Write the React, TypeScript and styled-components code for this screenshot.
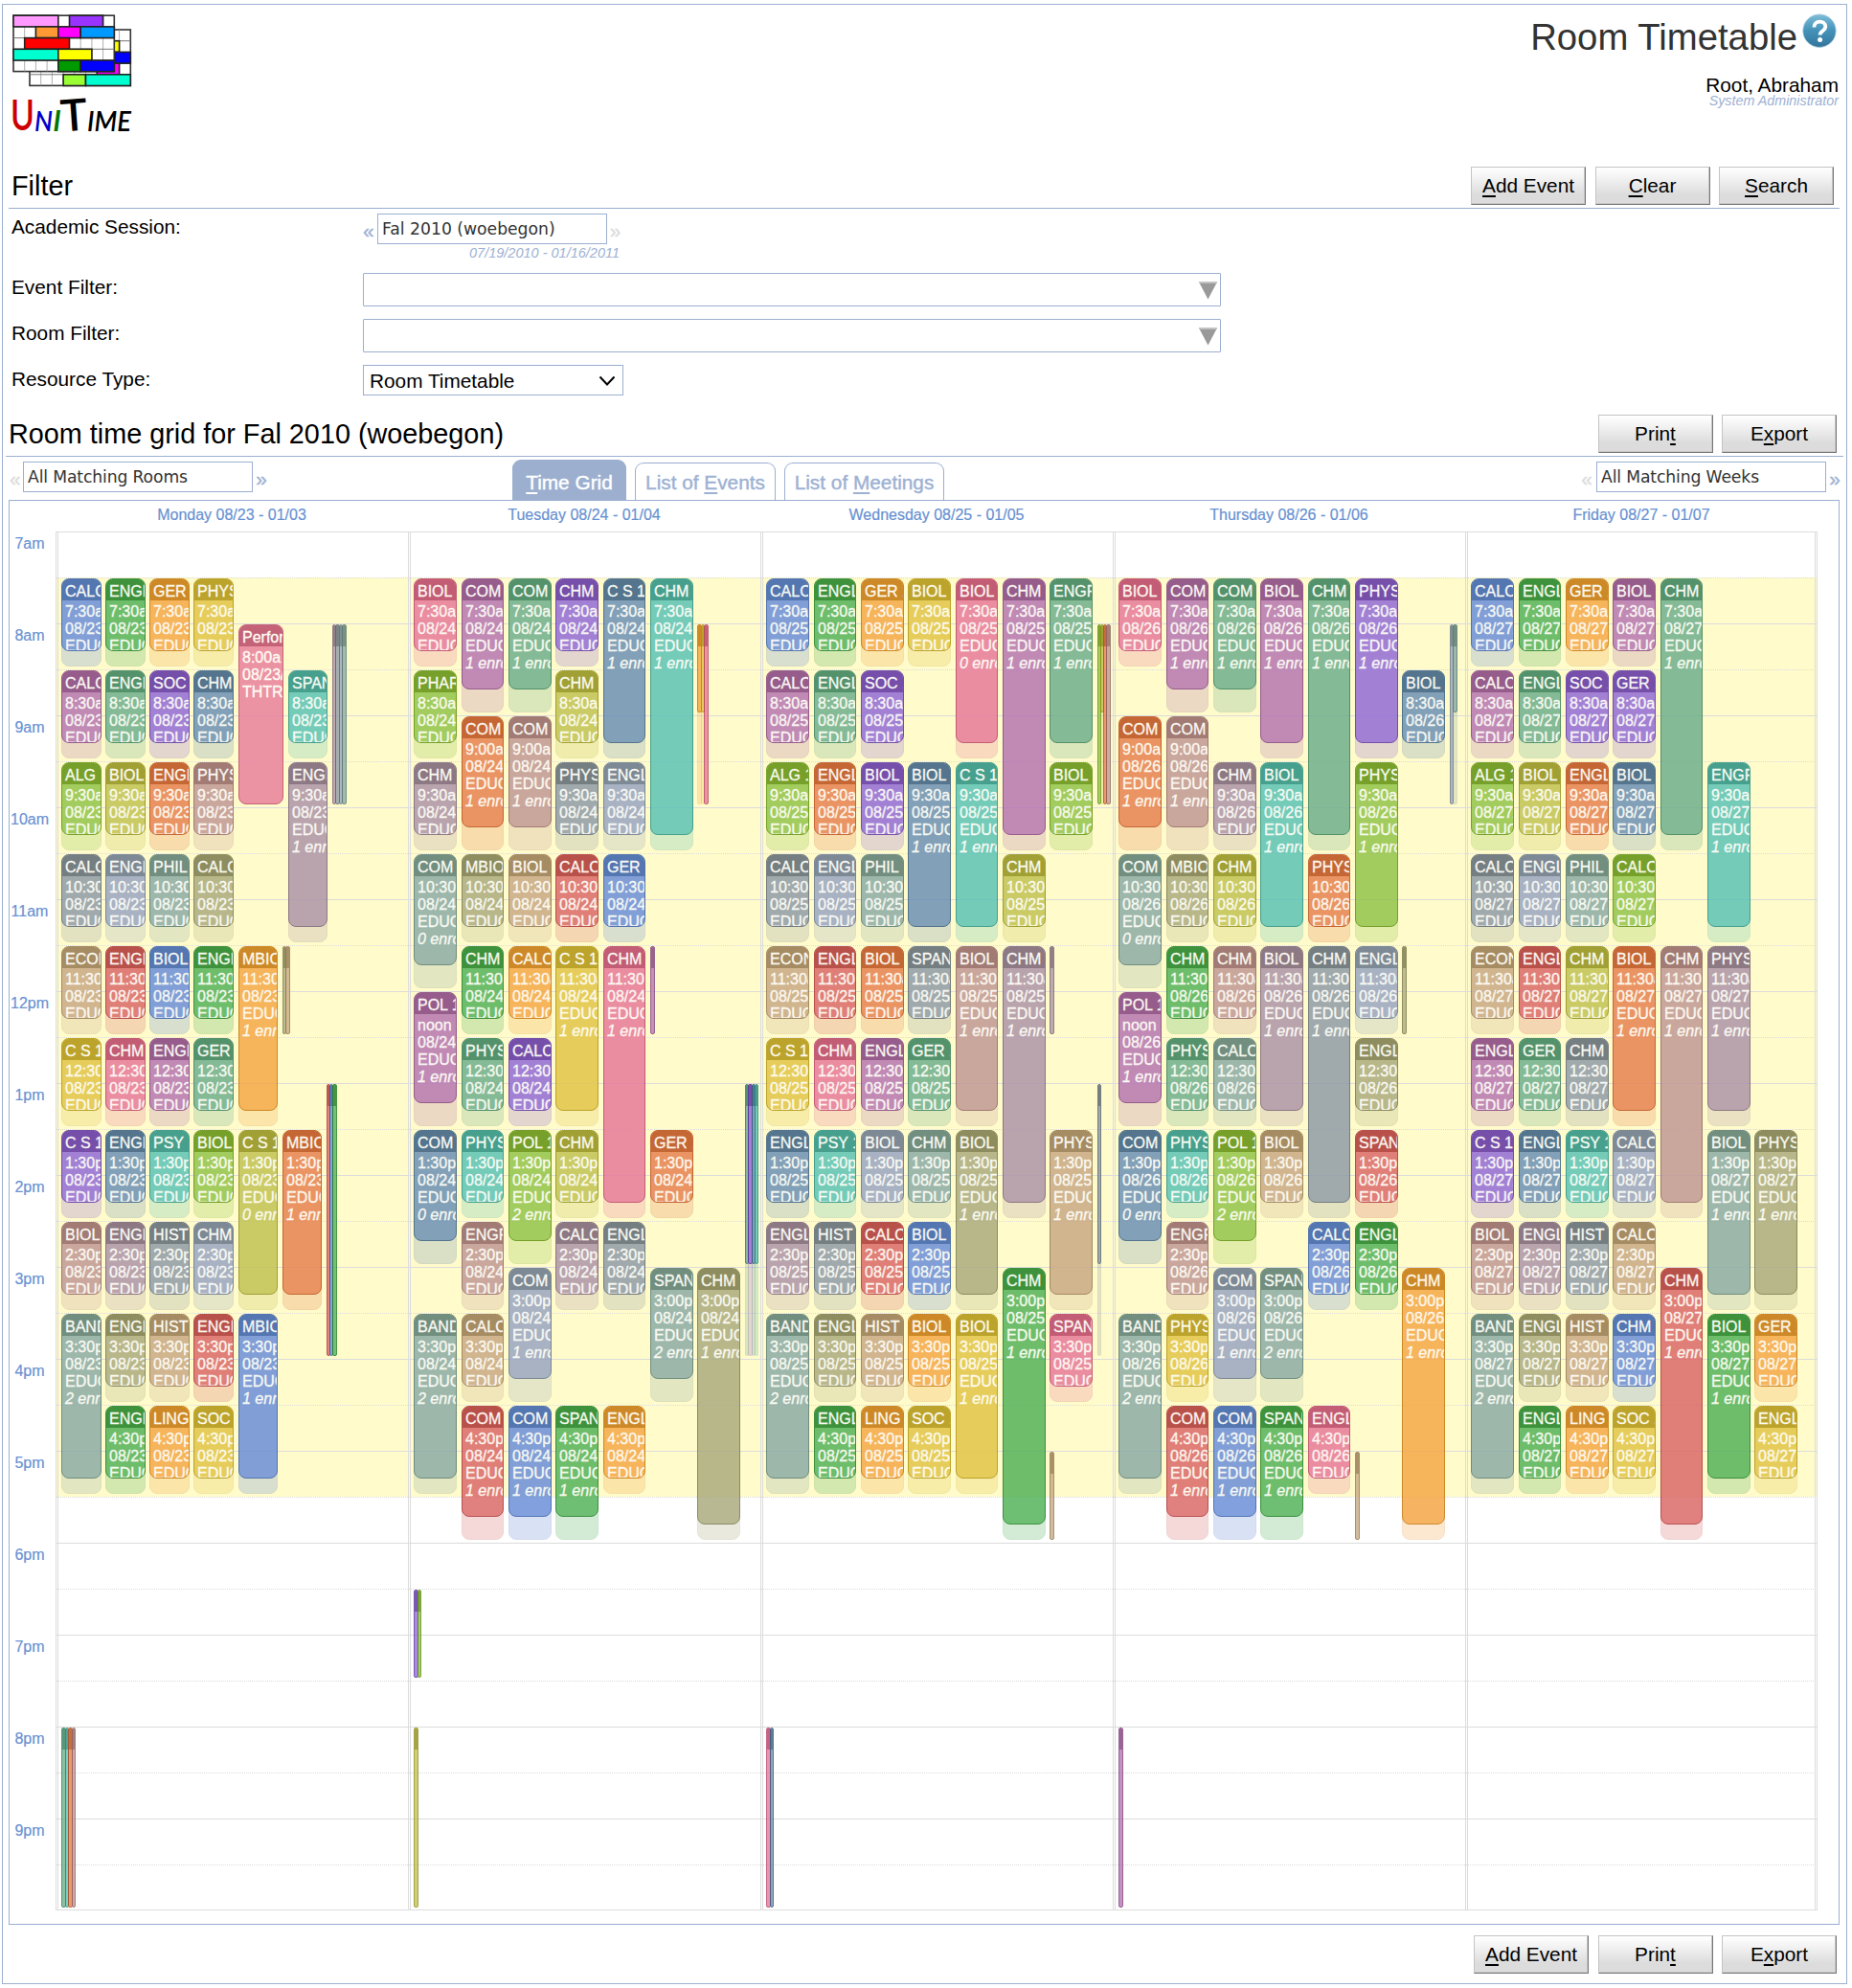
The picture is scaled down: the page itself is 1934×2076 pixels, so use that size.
import React from "react";
import styled, { createGlobalStyle, css } from "styled-components";

const LINE = "#9bafd0";
const LINK = "#9db1d3";
const SANS = `"Liberation Sans", Arial, sans-serif`;
const WIDE = `"DejaVu Sans", Verdana, sans-serif`;

const HOUR = 96;
const FIRST_HOUR = 7;

const Global = createGlobalStyle`
  *, *::before, *::after { box-sizing: border-box; }
  body { margin: 0; background: #fff; font-family: ${SANS}; font-size: 20.8px; color: #000; }
`;

/* ---------- palette: [body, header] ---------- */
const palette = {
  blue: ["rgb(108,144,216)", "rgb(51,92,170)"],
  green: ["rgb(85,179,91)", "rgb(25,125,31)"],
  orange: ["rgb(245,168,72)", "rgb(194,115,7)"],
  yellow: ["rgb(226,198,72)", "rgb(174,145,12)"],
  pink: ["rgb(232,122,154)", "rgb(182,62,99)"],
  mauve: ["rgb(182,119,178)", "rgb(129,62,125)"],
  jade: ["rgb(111,176,140)", "rgb(50,125,88)"],
  violet: ["rgb(147,109,215)", "rgb(91,46,162)"],
  slate: ["rgb(109,145,180)", "rgb(51,91,128)"],
  turq: ["rgb(91,195,182)", "rgb(36,142,128)"],
  lime: ["rgb(147,196,75)", "rgb(91,142,11)"],
  moss: ["rgb(194,195,84)", "rgb(142,142,24)"],
  rust: ["rgb(231,131,81)", "rgb(185,74,24)"],
  rose: ["rgb(194,153,149)", "rgb(142,98,98)"],
  plum: ["rgb(173,149,169)", "rgb(119,96,116)"],
  gray: ["rgb(144,156,167)", "rgb(91,102,114)"],
  steel: ["rgb(153,166,193)", "rgb(100,115,136)"],
  sage: ["rgb(141,172,166)", "rgb(86,121,111)"],
  olive: ["rgb(172,172,128)", "rgb(119,119,74)"],
  tan: ["rgb(200,169,133)", "rgb(148,118,78)"],
  red: ["rgb(219,106,105)", "rgb(171,49,50)"],
} as const;
type Tone = keyof typeof palette;

/* ---------- frame & header ---------- */
const Frame = styled.div`
  margin: 4px 0 0 2px;
  width: 1927px;
  height: 2068px;
  border: 1px solid ${LINE};
`;
const Header = styled.header`
  height: 165px;
  display: flex;
  justify-content: space-between;
  padding: 9px 8px 0 9px;
`;
const HeaderRight = styled.div`
  display: flex;
  flex-direction: column;
  align-items: flex-end;
`;
const TitleRow = styled.div`
  display: flex;
  align-items: flex-start;
  gap: 5px;
  margin-right: 2px;
  height: 60px;
`;
const Title = styled.h1`
  margin: 3px 0 0;
  font-size: 38.3px;
  line-height: 44px;
  font-weight: 400;
  color: #333;
`;
const User = styled.div`
  margin-top: 4px;
  line-height: 22px;
`;
const Role = styled.div`
  font-size: 14.3px;
  line-height: 14px;
  margin-top: -2px;
  font-style: italic;
  color: ${LINK};
`;

/* ---------- sections ---------- */
const SectionHead = styled.div<{ $wide?: boolean }>`
  display: flex;
  justify-content: space-between;
  align-items: flex-start;
  border-bottom: 1px solid ${LINE};
  ${(p) =>
    p.$wide
      ? css`margin: 0 3px; height: 52px; padding: 8px 7px 0 3px;`
      : css`margin: 0 7px 0 6px; height: 48px; padding: 4px 6px 0 3px;`}
`;
const Heading = styled.h2`
  margin: 3px 0 0;
  font-size: 28.8px;
  line-height: 34px;
  font-weight: 400;
`;
const Buttons = styled.div`
  display: flex;
  gap: 9.5px;
`;
const Button = styled.button`
  width: 120px;
  height: 40px;
  padding: 0 0 1px;
  font: 20.8px/24px ${SANS};
  color: #000;
  border: 1px solid;
  border-color: #c4c4c4 #777 #777 #c4c4c4;
  box-shadow: inset -1px -1px 0 #c6c6c6;
  background: linear-gradient(#fff 0%, #f4f4f4 25%, #dcdcdc 75%, #dcdcdc 100%);
  white-space: nowrap;
`;
const Key = styled.span`
  text-decoration: underline;
  text-underline-offset: 3px;
  text-decoration-thickness: 2px;
`;
const FormRow = styled.div<{ $h: number }>`
  display: grid;
  grid-template-columns: 367px 1fr;
  height: ${(p) => p.$h}px;
  padding: 4px 0 0 9px;
`;
const Label = styled.label`
  line-height: 24px;
  padding-top: 3px;
`;
const SessionField = styled.div`
  width: 268px;
  padding-top: 1px;
`;
const SelectorRow = styled.div`
  display: flex;
  align-items: flex-start;
`;
const Arrow = styled.span<{ $off?: boolean; $w: number }>`
  flex: none;
  width: ${(p) => p.$w}px;
  padding-right: 4px;
  text-align: center;
  font-size: 20.8px;
  line-height: 35px;
  color: ${(p) => (p.$off ? "#dcdcdc" : LINK)};
  -webkit-text-stroke: 0.4px currentColor;
  &:last-child { padding: 0 0 0 2px; }
`;
const TextBox = styled.div<{ $tight?: boolean }>`
  flex: none;
  width: 240px;
  height: 32px;
  border: 1px solid ${LINE};
  padding-left: 4px;
  font-family: ${WIDE};
  font-size: 17.2px;
  letter-spacing: ${(p) => (p.$tight ? "-0.13px" : "0")};
  line-height: 31px;
  color: #333;
  white-space: nowrap;
`;
const Dates = styled.div`
  font-size: 14.5px;
  font-style: italic;
  color: ${LINK};
  line-height: 17px;
  margin-top: -2px;
  text-align: right;
`;
const FilterBox = styled.div`
  width: 896px;
  height: 35px;
  border: 1px solid ${LINE};
  border-radius: 1px;
  display: flex;
  justify-content: flex-end;
  padding: 8px 3px 0 0;
`;
const Select = styled.div`
  width: 272px;
  height: 32px;
  border: 1px solid ${LINE};
  display: flex;
  justify-content: space-between;
  align-items: center;
  padding: 1px 7px 0 6px;
  line-height: 24px;
`;

/* ---------- toolbar ---------- */
const Toolbar = styled.div`
  height: 45px;
  display: grid;
  grid-template-columns: 525px 1fr 277px;
  padding: 0 0 0 7px;
`;
const ToolSide = styled(SelectorRow)`
  padding-top: 5px;
`;
const Tabs = styled.div`
  display: flex;
  align-items: flex-end;
`;
const Tab = styled.div<{ $active?: boolean; $w: number }>`
  width: ${(p) => p.$w}px;
  height: ${(p) => (p.$active ? 42 : 39)}px;
  margin-right: 9px;
  border: 1px solid ${LINE};
  border-bottom: 0;
  border-radius: 9px 9px 0 0;
  text-align: center;
  line-height: 24px;
  padding-top: ${(p) => (p.$active ? 11 : 8)}px;
  background: ${(p) => (p.$active ? "#9dafcf" : "#fff")};
  color: ${(p) => (p.$active ? "#fff" : LINK)};
  white-space: nowrap;
  -webkit-text-stroke: 0.4px currentColor;
`;

/* ---------- timetable ---------- */
const Panel = styled.section`
  margin: 0 7px 0 6px;
  height: 1488px;
  border: 1px solid ${LINE};
`;
const DayNames = styled.div`
  display: grid;
  grid-template-columns: repeat(5, 368px);
  padding-left: 48px;
  height: 32px;
`;
const DayName = styled.div`
  text-align: center;
  font-size: 16px;
  line-height: 18px;
  padding-top: 6px;
  color: #6992d2;
  -webkit-text-stroke: 0.2px currentColor;
`;
const GridRow = styled.div`
  display: flex;
`;
const Times = styled.div`
  width: 48px;
  padding-right: 6px;
`;
const Time = styled.div`
  height: ${HOUR}px;
  padding-top: 4px;
  text-align: center;
  font-size: 16px;
  line-height: 18px;
  color: #6992d2;
  -webkit-text-stroke: 0.2px currentColor;
`;
const Canvas = styled.div`
  position: relative;
  width: 1840px;
  border-bottom: 1px solid #ddd;
  height: 1440px;
`;
const Half = styled.div<{ $dotted: boolean; $work: boolean }>`
  height: 48px;
  margin-left: 1px;
  border-top: 1px ${(p) => (p.$dotted ? "dotted" : "solid")} #dcdcdc;
  background: ${(p) => (p.$work ? "#fffbcb" : "transparent")};
`;
const Days = styled.div`
  position: absolute;
  inset: 0;
  display: flex;
`;
const Day = styled.div`
  position: relative;
  width: 368px;
  border-left: 3px double #dcdcdc;
  &:last-child { border-right: 3px double #dcdcdc; }
`;

const Block = styled.div`
  position: absolute;
`;
const Ghost = styled.div<{ $tone: Tone; $thin: boolean }>`
  position: absolute;
  inset: 0;
  border: 1px solid color-mix(in srgb, ${(p) => palette[p.$tone][1]} 45%, ${(p) => palette[p.$tone][0]});
  border-radius: ${(p) => (p.$thin ? 2 : 8)}px;
  background: ${(p) => palette[p.$tone][0]};
  opacity: 0.25;
`;
const Meeting = styled.div<{ $tone: Tone; $thin: boolean }>`
  position: relative;
  border: 1px solid ${(p) => palette[p.$tone][1]};
  border-radius: ${(p) => (p.$thin ? 2 : 8)}px;
  background: ${(p) => palette[p.$tone][0]};
  opacity: 0.8;
  overflow: hidden;
  color: #fff;
  font-size: 16px;
  line-height: 18px;
  white-space: nowrap;
  -webkit-text-stroke: 0.3px #fff;
`;
const MeetingHead = styled.div<{ $tone: Tone }>`
  height: 22px;
  padding: 4px 0 0 3px;
  background: ${(p) => palette[p.$tone][1]};
`;
const MeetingBody = styled.div`
  padding: 3px 0 0 3px;
`;
const Footer = styled.footer`
  display: flex;
  justify-content: flex-end;
  padding: 11px 10px 0 0;
`;

/* ---------- data ---------- */
// Each entry: start, kind, tone, subject[, enrolled]; kinds give [taught, booked] minutes.
const kinds: Record<string, [number, number]> = {
  s: [50, 60],
  c: [75, 90],
  l: [110, 120],
  x: [170, 180],
  f: [120, 120],
  h: [60, 60],
  t: [180, 180],
  p: [60, 120],
  q: [120, 180],
};
type Column = { x: number; w: number; items: string };
type DayData = { name: string; date: string; columns: Column[] };

const mon: Column[] = [
  { x: 6, w: 42, items: "7:30 s blue CALC|8:30 s mauve CALC|9:30 s lime ALG|10:30 s gray CALC|11:30 s tan ECON|12:30 s yellow C_S|13:30 s violet C_S|14:30 s rose BIOL|15:30 l sage BAND 2" },
  { x: 52, w: 42, items: "7:30 s green ENGL|8:30 s jade ENGL|9:30 s moss BIOL|10:30 s steel ENGL|11:30 s red ENGL|12:30 s pink CHM|13:30 s slate ENGL|14:30 s plum ENGL|15:30 s olive ENGL|16:30 s green ENGL" },
  { x: 98, w: 42, items: "7:30 s orange GER|8:30 s violet SOC|9:30 s rust ENGL|10:30 s sage PHIL|11:30 s blue BIOL|12:30 s mauve ENGL|13:30 s turq PSY|14:30 s gray HIST|15:30 s tan HIST|16:30 s orange LING" },
  { x: 144, w: 42, items: "7:30 s yellow PHYS|8:30 s slate CHM|9:30 s rose PHYS|10:30 s olive CALC|11:30 s green ENGL|12:30 s jade GER|13:30 s lime BIOL|14:30 s steel CHM|15:30 s red ENGL|16:30 s yellow SOC" },
  { x: 191, w: 47, items: "8:00 f pink Performance" },
  { x: 191, w: 41, items: "11:30 l orange MBIO 1|13:30 l moss C_S 0|15:30 l blue MBIO 1" },
  { x: 237, w: 41, items: "13:30 l rust MBIO 1" },
  { x: 243, w: 41, items: "8:30 s turq SPAN|9:30 l plum ENGR 1" },
  { x: 289, w: 4, items: "8:00 f plum" },
  { x: 292, w: 5, items: "8:00 f gray" },
  { x: 296, w: 4, items: "8:00 f steel" },
  { x: 299, w: 5, items: "8:00 f sage" },
  { x: 237, w: 4, items: "11:30 h olive" },
  { x: 240, w: 5, items: "11:30 h tan" },
  { x: 283, w: 4, items: "13:00 t red" },
  { x: 286, w: 4, items: "13:00 t blue" },
  { x: 289, w: 5, items: "13:00 t green" },
  { x: 6, w: 5, items: "20:00 f jade" },
  { x: 10, w: 4, items: "20:00 f turq" },
  { x: 13, w: 5, items: "20:00 f rust" },
  { x: 17, w: 4, items: "20:00 f rose" },
];
const tue: Column[] = [
  { x: 6, w: 45, items: "7:30 s pink BIOL|8:30 s lime PHAR|9:30 s plum CHM|10:30 c sage COM 0|12:00 c mauve POL 1|13:30 c slate COM 0|15:30 l sage BAND 2" },
  { x: 56, w: 44, items: "7:30 c mauve COM 1|9:00 c rust COM 1|10:30 s olive MBIO|11:30 s green CHM|12:30 s jade PHYS|13:30 s turq PHYS|14:30 s rose ENGR|15:30 s tan CALC|16:30 c red COM 1" },
  { x: 105, w: 45, items: "7:30 c jade COM 1|9:00 c rose COM 1|10:30 s tan BIOL|11:30 s orange CALC|12:30 s violet CALC|13:30 c lime POL 2|15:00 c steel COM 1|16:30 c blue COM 1" },
  { x: 154, w: 45, items: "7:30 s violet CHM|8:30 s moss CHM|9:30 s gray PHYS|10:30 s red CALC|11:30 l yellow C_S 1|13:30 s moss CHM|14:30 s plum CALC|16:30 c green SPAN 1" },
  { x: 204, w: 44, items: "7:30 l slate C_S 1|9:30 s steel ENGL|10:30 s blue GER|11:30 x pink CHM 1|14:30 s gray ENGL|16:30 s orange ENGL" },
  { x: 253, w: 45, items: "7:30 x turq CHM 1|13:30 s rust GER|15:00 c sage SPAN 2" },
  { x: 302, w: 45, items: "15:00 x olive CHM 1" },
  { x: 302, w: 5, items: "8:00 p orange" },
  { x: 306, w: 4, items: "8:00 p yellow" },
  { x: 309, w: 5, items: "8:00 f pink" },
  { x: 253, w: 5, items: "11:30 h mauve" },
  { x: 352, w: 4, items: "13:00 q jade" },
  { x: 355, w: 5, items: "13:00 q violet" },
  { x: 359, w: 4, items: "13:00 q slate" },
  { x: 362, w: 4, items: "13:00 q turq" },
  { x: 6, w: 5, items: "18:30 h violet" },
  { x: 10, w: 4, items: "18:30 h lime" },
  { x: 6, w: 5, items: "20:00 f moss" },
];
const wed: Column[] = [
  { x: 6, w: 45, items: "7:30 s blue CALC|8:30 s mauve CALC|9:30 s lime ALG|10:30 s gray CALC|11:30 s tan ECON|12:30 s yellow C_S|13:30 s slate ENGL|14:30 s plum ENGL|15:30 l sage BAND 2" },
  { x: 56, w: 44, items: "7:30 s green ENGL|8:30 s jade ENGL|9:30 s rust ENGL|10:30 s steel ENGL|11:30 s red ENGL|12:30 s pink CHM|13:30 s turq PSY|14:30 s gray HIST|15:30 s olive ENGL|16:30 s green ENGL" },
  { x: 105, w: 45, items: "7:30 s orange GER|8:30 s violet SOC|9:30 s violet BIOL|10:30 s sage PHIL|11:30 s rust BIOL|12:30 s mauve ENGL|13:30 s steel BIOL|14:30 s red CALC|15:30 s tan HIST|16:30 s orange LING" },
  { x: 154, w: 45, items: "7:30 s yellow BIOL|9:30 l slate BIOL 1|11:30 s gray SPAN|12:30 s jade GER|13:30 s sage CHM|14:30 s blue BIOL|15:30 s orange BIOL|16:30 s yellow SOC" },
  { x: 204, w: 44, items: "7:30 l pink BIOL 0|9:30 l turq C_S 1|11:30 l rose BIOL 1|13:30 l olive BIOL 1|15:30 l yellow BIOL 1" },
  { x: 253, w: 45, items: "7:30 x mauve CHM 1|10:30 s moss CHM|11:30 x plum CHM 1|15:00 x green CHM 1" },
  { x: 302, w: 45, items: "7:30 l jade ENGR 1|9:30 s lime BIOL|13:30 l tan PHYS 1|15:30 s pink SPAN" },
  { x: 352, w: 4, items: "8:00 f lime|13:00 q gray" },
  { x: 355, w: 4, items: "8:00 p moss" },
  { x: 358, w: 4, items: "8:00 f rust" },
  { x: 361, w: 5, items: "8:00 f rose" },
  { x: 302, w: 5, items: "11:30 h plum|17:00 h tan" },
  { x: 6, w: 5, items: "20:00 f pink" },
  { x: 10, w: 4, items: "20:00 f slate" },
];
const thu: Column[] = [
  { x: 6, w: 45, items: "7:30 s pink BIOL|9:00 c rust COM 1|10:30 c sage COM 0|12:00 c mauve POL 1|13:30 c slate COM 0|15:30 l sage BAND 2" },
  { x: 56, w: 44, items: "7:30 c mauve COM 1|9:00 c rose COM 1|10:30 s olive MBIO|11:30 s green CHM|12:30 s jade PHYS|13:30 s turq PHYS|14:30 s rose ENGR|15:30 s yellow PHYS|16:30 c red COM 1" },
  { x: 105, w: 45, items: "7:30 c jade COM 1|9:30 s plum CHM|10:30 s moss CHM|11:30 s rose CHM|12:30 s sage CALC|13:30 c lime POL 2|15:00 c steel COM 1|16:30 c blue COM 1" },
  { x: 154, w: 45, items: "7:30 l mauve BIOL 1|9:30 l turq BIOL 1|11:30 l plum BIOL 1|13:30 s tan BIOL|15:00 c sage SPAN 2|16:30 c green SPAN 1" },
  { x: 204, w: 44, items: "7:30 x jade CHM 1|10:30 s rust PHYS|11:30 x gray CHM 1|14:30 s blue CALC|16:30 s pink ENGL" },
  { x: 253, w: 45, items: "7:30 l violet PHYS 1|9:30 l lime PHYS 1|11:30 s steel ENGL|12:30 s olive ENGL|13:30 s red SPAN|14:30 s green ENGL" },
  { x: 302, w: 45, items: "8:30 s slate BIOL|15:00 x orange CHM 1" },
  { x: 352, w: 4, items: "8:00 f steel" },
  { x: 355, w: 5, items: "8:00 p sage" },
  { x: 302, w: 5, items: "11:30 h olive" },
  { x: 253, w: 5, items: "17:00 h tan" },
  { x: 6, w: 5, items: "20:00 f mauve" },
];
const fri: Column[] = [
  { x: 6, w: 45, items: "7:30 s blue CALC|8:30 s mauve CALC|9:30 s lime ALG|10:30 s gray CALC|11:30 s tan ECON|12:30 s mauve ENGL|13:30 s violet C_S|14:30 s rose BIOL|15:30 l sage BAND 2" },
  { x: 56, w: 44, items: "7:30 s green ENGL|8:30 s jade ENGL|9:30 s moss BIOL|10:30 s steel ENGL|11:30 s red ENGL|12:30 s jade GER|13:30 s slate ENGL|14:30 s plum ENGL|15:30 s olive ENGL|16:30 s green ENGL" },
  { x: 105, w: 45, items: "7:30 s orange GER|8:30 s violet SOC|9:30 s rust ENGL|10:30 s sage PHIL|11:30 s moss CHM|12:30 s gray CHM|13:30 s turq PSY|14:30 s gray HIST|15:30 s tan HIST|16:30 s orange LING" },
  { x: 154, w: 45, items: "7:30 s mauve BIOL|8:30 s violet GER|9:30 s slate BIOL|10:30 s lime CALC|11:30 l rust BIOL 1|13:30 s steel CALC|14:30 s tan CALC|15:30 s blue CHM|16:30 s yellow SOC" },
  { x: 204, w: 44, items: "7:30 x jade CHM 1|11:30 x rose CHM 1|15:00 x red CHM 1" },
  { x: 253, w: 45, items: "9:30 l turq ENGR 1|11:30 l plum PHYS 1|13:30 l sage BIOL 1|15:30 l green BIOL 1" },
  { x: 302, w: 45, items: "13:30 l olive PHYS 1|15:30 s orange GER|16:30 s yellow ENGL" },
];
const week: DayData[] = [
  { name: "Monday 08/23 - 01/03", date: "08/23/2010", columns: mon },
  { name: "Tuesday 08/24 - 01/04", date: "08/24/2010", columns: tue },
  { name: "Wednesday 08/25 - 01/05", date: "08/25/2010", columns: wed },
  { name: "Thursday 08/26 - 01/06", date: "08/26/2010", columns: thu },
  { name: "Friday 08/27 - 01/07", date: "08/27/2010", columns: fri },
];
const hours = ["7am", "8am", "9am", "10am", "11am", "12pm", "1pm", "2pm", "3pm", "4pm", "5pm", "6pm", "7pm", "8pm", "9pm"];

function clock(h: number, m: number) {
  if (h === 12 && m === 0) return "noon";
  return `${h > 12 ? h - 12 : h}:${m === 0 ? "00" : m}${h < 12 ? "a" : "p"}`;
}

function Event({ x, w, spec, date }: { x: number; w: number; spec: string; date: string }) {
  const [start, kind, toneName, subject, enrolled] = spec.split(" ");
  const tone = toneName as Tone;
  const [h, m] = start.split(":").map(Number);
  const [taught, booked] = kinds[kind];
  const px = (minutes: number) => (minutes * HOUR) / 60 - 4;
  const top = (h + m / 60 - FIRST_HOUR) * HOUR + 1;
  const thin = w < 10;
  return (
    <Block style={{ left: x - 3, top, width: w, height: px(booked) }}>
      {booked > taught && <Ghost $tone={tone} $thin={thin} />}
      <Meeting $tone={tone} $thin={thin} style={{ height: px(taught) }}>
        <MeetingHead $tone={tone}>{subject && (subject === "Performance" ? subject : `${subject.replace("_", " ")} 101`)}</MeetingHead>
        {subject && (
          <MeetingBody>
            {clock(h, m)} -<br />
            {date}
            <br />
            {subject === "Performance" ? "THTR 101" : "EDUC 101"}
            {enrolled && (
              <>
                <br />
                <i>{enrolled} enrolled</i>
              </>
            )}
          </MeetingBody>
        )}
      </Meeting>
    </Block>
  );
}

/* ---------- drawings ---------- */
const CW = 11.7;
function Sheet({ x, y, cells }: { x: number; y: number; cells: [number, number, number, string][] }) {
  return (
    <g transform={`translate(${x} ${y})`}>
      <rect width={CW * 9} height={58.4} fill="#fff" stroke="#333" strokeWidth="1.6" />
      {[1, 2, 3, 4, 5, 6, 7, 8].map((i) => (
        <path key={i} d={`M${i * CW} 0V58.4`} stroke="#999" strokeWidth="0.8" />
      ))}
      {[1, 2, 3, 4].map((i) => (
        <path key={i} d={`M0 ${i * CW}H${CW * 9}`} stroke="#777" strokeWidth="1" />
      ))}
      {cells.map(([r, a, b, fill], i) => (
        <rect key={i} x={a * CW} y={r * CW} width={(b - a) * CW} height={CW} fill={fill} stroke="#222" strokeWidth="1.6" />
      ))}
    </g>
  );
}
const LogoSvg = styled.svg`
  overflow: visible;
`;
function Logo() {
  return (
    <LogoSvg width="128" height="128" viewBox="12 14 128 128">
      <Sheet x={31} y={31} cells={[[1, 6, 8, "#ff0"], [2, 7, 9, "#00f"], [3, 6, 8, "#f0f"], [4, 3, 5, "#9f3"], [4, 5, 9, "#00ffd0"]]} />
      <Sheet
        x={14}
        y={16.2}
        cells={[
          [0, 0, 4, "#f9f"], [0, 5, 8, "#93f"],
          [1, 2, 4, "#f93"], [1, 4, 6, "#f0f"], [1, 6, 9, "#09f"],
          [2, 1, 5, "#f00"],
          [3, 0, 4, "#00ffd0"], [3, 4, 7, "#ff0"],
          [4, 4, 6, "#090"], [4, 6, 9, "#00f"],
        ]}
      />
      <g fontFamily="Lato, sans-serif" fontWeight="600">
        <text x="11" y="136" fontSize="45" textLength="25" lengthAdjust="spacingAndGlyphs" fill="#c00">U</text>
        <text x="36" y="137" fontSize="28" textLength="19" lengthAdjust="spacingAndGlyphs" fill="#00c" fontStyle="italic">N</text>
        <text x="55" y="136.5" fontSize="31" textLength="9" lengthAdjust="spacingAndGlyphs" fill="#070" fontStyle="italic">I</text>
        <text x="63" y="136.5" fontSize="46" textLength="28" lengthAdjust="spacingAndGlyphs" fill="#000" transform="rotate(-4 77 120)">T</text>
        <text x="91" y="136.5" fontSize="29" textLength="46" lengthAdjust="spacingAndGlyphs" fill="#000" fontStyle="italic">IME</text>
      </g>
    </LogoSvg>
  );
}
function HelpIcon() {
  return (
    <svg width="36" height="38" viewBox="0 0 36 38">
      <defs>
        <linearGradient id="help" x1="0" y1="0" x2="0" y2="1">
          <stop offset="0" stopColor="#7dbdd8" />
          <stop offset="0.5" stopColor="#4391b8" />
          <stop offset="1" stopColor="#34759c" />
        </linearGradient>
      </defs>
      <circle cx="18" cy="18.2" r="17.2" fill="url(#help)" stroke="#a9cfe0" strokeWidth="0.8" />
      <path d="M12.4 14.4c0-3.8 2.6-5.8 5.9-5.8s6 2 6 5.2c0 4.6-5.7 4.3-5.7 8.8" fill="none" stroke="#fff" strokeWidth="3.8" />
      <circle cx="18.6" cy="27.4" r="2.5" fill="#fff" />
    </svg>
  );
}
const Triangle = () => (
  <svg width="19" height="19" viewBox="0 0 19 19">
    <path d="M0 0.5H19L9.5 18.6Z" fill="#999" />
    <path d="M0 0H19V2H0.8Z" fill="#c2c2c2" />
  </svg>
);
const Chevron = () => (
  <svg width="18" height="12" viewBox="0 0 18 12">
    <path d="M1.5 1.5L9 9.5L16.5 1.5" fill="none" stroke="#000" strokeWidth="2" />
  </svg>
);

export default function App() {
  return (
    <>
      <Global />
      <Frame>
        <Header>
          <Logo />
          <HeaderRight>
            <TitleRow>
              <Title>Room Timetable</Title>
              <HelpIcon />
            </TitleRow>
            <User>Root, Abraham</User>
            <Role>System Administrator</Role>
          </HeaderRight>
        </Header>

        <SectionHead>
          <Heading>Filter</Heading>
          <Buttons>
            <Button><Key>A</Key>dd Event</Button>
            <Button><Key>C</Key>lear</Button>
            <Button><Key>S</Key>earch</Button>
          </Buttons>
        </SectionHead>
        <FormRow $h={63}>
          <Label>Academic Session:</Label>
          <SessionField>
            <SelectorRow>
              <Arrow $w={15}>«</Arrow>
              <TextBox>Fal 2010 (woebegon)</TextBox>
              <Arrow $w={15} $off>»</Arrow>
            </SelectorRow>
            <Dates>07/19/2010 - 01/16/2011</Dates>
          </SessionField>
        </FormRow>
        <FormRow $h={48}>
          <Label>Event Filter:</Label>
          <FilterBox><Triangle /></FilterBox>
        </FormRow>
        <FormRow $h={48}>
          <Label>Room Filter:</Label>
          <FilterBox><Triangle /></FilterBox>
        </FormRow>
        <FormRow $h={48}>
          <Label>Resource Type:</Label>
          <Select>Room Timetable<Chevron /></Select>
        </FormRow>

        <SectionHead $wide>
          <Heading>Room time grid for Fal 2010 (woebegon)</Heading>
          <Buttons>
            <Button>Prin<Key>t</Key></Button>
            <Button>E<Key>x</Key>port</Button>
          </Buttons>
        </SectionHead>
        <Toolbar>
          <ToolSide>
            <Arrow $w={14} $off>«</Arrow>
            <TextBox $tight>All Matching Rooms</TextBox>
            <Arrow $w={16}>»</Arrow>
          </ToolSide>
          <Tabs>
            <Tab $active $w={119}><Key>T</Key>ime Grid</Tab>
            <Tab $w={147}>List of <Key>E</Key>vents</Tab>
            <Tab $w={167}>List of <Key>M</Key>eetings</Tab>
          </Tabs>
          <ToolSide>
            <Arrow $w={16} $off>«</Arrow>
            <TextBox $tight>All Matching Weeks</TextBox>
            <Arrow $w={16}>»</Arrow>
          </ToolSide>
        </Toolbar>

        <Panel>
          <DayNames>
            {week.map((d) => (
              <DayName key={d.name}>{d.name}</DayName>
            ))}
          </DayNames>
          <GridRow>
            <Times>
              {hours.map((t) => (
                <Time key={t}>{t}</Time>
              ))}
            </Times>
            <Canvas>
              {Array.from({ length: 30 }, (_, i) => (
                <Half key={i} $dotted={i % 2 === 1} $work={i >= 1 && i < 21} />
              ))}
              <Days>
                {week.map((d) => (
                  <Day key={d.name}>
                    {d.columns.flatMap((c, ci) =>
                      c.items.split("|").map((spec, i) => (
                        <Event key={`${ci}-${i}`} x={c.x} w={c.w} spec={spec} date={d.date} />
                      ))
                    )}
                  </Day>
                ))}
              </Days>
            </Canvas>
          </GridRow>
        </Panel>

        <Footer>
          <Buttons>
            <Button><Key>A</Key>dd Event</Button>
            <Button>Prin<Key>t</Key></Button>
            <Button>E<Key>x</Key>port</Button>
          </Buttons>
        </Footer>
      </Frame>
    </>
  );
}
